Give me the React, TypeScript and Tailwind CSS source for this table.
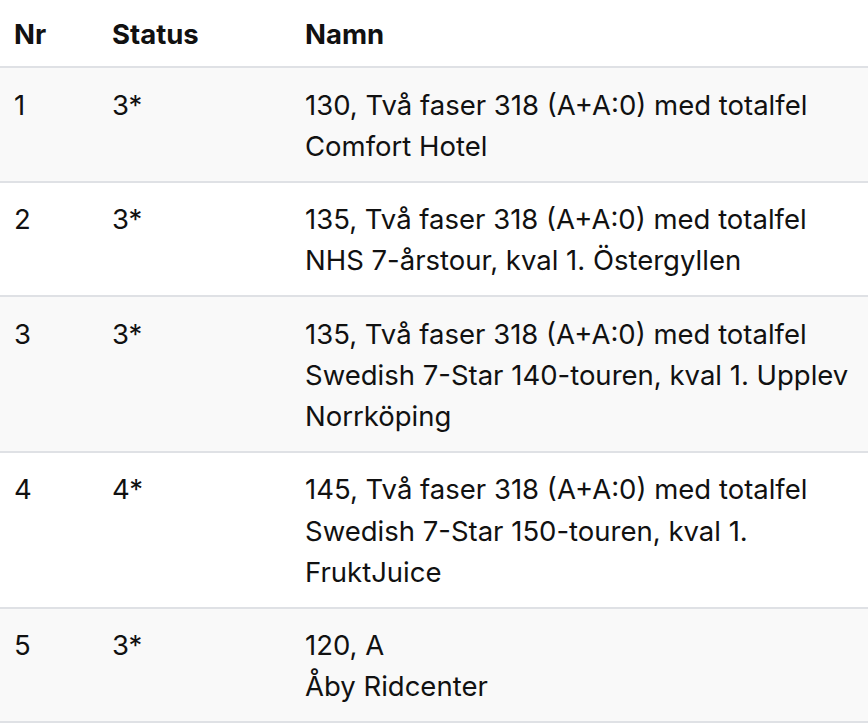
import React from "react";

type Row = { nr: string; status: string; lines: string[] };

const rows: Row[] = [
  { nr: "1", status: "3*", lines: ["130, Två faser 318 (A+A:0) med totalfel", "Comfort Hotel"] },
  { nr: "2", status: "3*", lines: ["135, Två faser 318 (A+A:0) med totalfel", "NHS 7-årstour, kval 1. Östergyllen"] },
  {
    nr: "3",
    status: "3*",
    lines: ["135, Två faser 318 (A+A:0) med totalfel", "Swedish 7-Star 140-touren, kval 1. Upplev", "Norrköping"],
  },
  {
    nr: "4",
    status: "4*",
    lines: ["145, Två faser 318 (A+A:0) med totalfel", "Swedish 7-Star 150-touren, kval 1.", "FruktJuice"],
  },
  { nr: "5", status: "3*", lines: ["120, A", "Åby Ridcenter"] },
];

export default function App() {
  return (
    <div className="w-[868px] bg-white font-['Inter',sans-serif] text-[27.5px] leading-[1.5] text-[#111]">
      <table className="w-full table-fixed border-collapse">
        <colgroup>
          <col className="w-[98px]" />
          <col className="w-[193px]" />
          <col />
        </colgroup>
        <thead>
          <tr className="border-b-2 border-[#dfe1e5]">
            <th className="px-[14px] pt-[13.5px] pb-[11.3px] text-left align-top font-bold">Nr</th>
            <th className="px-[14px] pt-[13.5px] pb-[11.3px] text-left align-top font-bold">Status</th>
            <th className="px-[14px] pt-[13.5px] pb-[11.3px] text-left align-top font-bold">Namn</th>
          </tr>
        </thead>
        <tbody>
          {rows.map((r, i) => (
            <tr key={r.nr} className={`border-b-2 border-[#dfe1e5] ${i % 2 === 0 ? "bg-[#f9f9f9]" : "bg-white"}`}>
              <td className="px-[14px] pt-[16.5px] pb-[13.5px] align-top">{r.nr}</td>
              <td className="px-[14px] pt-[16.5px] pb-[13.5px] align-top">{r.status}</td>
              <td className="px-[14px] pt-[16.5px] pb-[13.5px] align-top whitespace-nowrap">
                {r.lines.map((l) => (
                  <div key={l}>{l}</div>
                ))}
              </td>
            </tr>
          ))}
        </tbody>
      </table>
    </div>
  );
}
